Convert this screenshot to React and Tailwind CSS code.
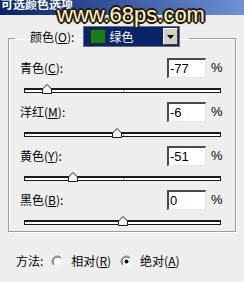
import React from 'react';

// Photoshop "Selective Color" dialog, classic Windows look
const rows = [
  { name: '青色', key: 'C', value: -77 },
  { name: '洋红', key: 'M', value: -6 },
  { name: '黄色', key: 'Y', value: -51 },
  { name: '黑色', key: 'B', value: 0 },
];

const TRACK_W = 197;

const Label = ({ name, k }) => (
  <span className="leading-[16px] whitespace-nowrap">
    {name}(<span className="underline underline-offset-[1px]">{k}</span>):
  </span>
);

const Slider = ({ value }) => {
  const x = ((value + 100) / 200) * TRACK_W;
  return (
    <div className="relative ml-[4px] mt-[10px] h-[5px] w-[197px] border border-t-2 border-[#1a1a1a] bg-white">
      <div className="absolute left-1/2 top-0 h-full w-px bg-[#b8b8b8]" />
      <svg
        width="10"
        height="10"
        viewBox="0 0 10 10"
        className="absolute top-[-6px]"
        style={{ left: x - 5.5 }}
      >
        <polygon points="0.5,9.5 0.5,5 5,0.5 9.5,5 9.5,9.5" fill="#f6f6f6" stroke="#1e1e1e" />
      </svg>
    </div>
  );
};

const Radio = ({ checked }) => (
  <svg width="13" height="13" viewBox="0 0 13 13" className="shrink-0">
    <circle cx="6.5" cy="6.5" r="5.5" fill="#ffffff" />
    <path d="M2.6 10.4 A5.5 5.5 0 0 1 10.4 2.6" fill="none" stroke="#8a8a8a" />
    <path d="M10.4 2.6 A5.5 5.5 0 0 1 2.6 10.4" fill="none" stroke="#ffffff" />
    <path d="M3.3 9.7 A4.5 4.5 0 0 1 9.7 3.3" fill="none" stroke="#4a4a4a" />
    <path d="M9.7 3.3 A4.5 4.5 0 0 1 3.3 9.7" fill="none" stroke="#dedede" />
    {checked && <circle cx="6.5" cy="6.5" r="2" fill="#000" />}
  </svg>
);

export default function App() {
  return (
    <div className="relative h-[282px] w-[244px] overflow-hidden bg-[#eeeeee] font-['Noto_Sans_CJK_SC',sans-serif] text-[12px] text-black">
      {/* title bar (cut off at top) */}
      <div className="h-[15px] overflow-hidden bg-gradient-to-r from-[#0a246a] to-[#7090d4]">
        <div className="mt-[-3px] pl-[1px] text-[12px] font-bold leading-[14px] text-white">
          可选颜色选项
        </div>
      </div>

      {/* site watermark */}
      <div className="absolute left-[57px] top-[4px] font-['Liberation_Sans',Arial,sans-serif] text-[22px] leading-[22px] text-[#fff6c6] [text-shadow:1px_1px_0_#24180a,-1px_-1px_0_#24180a,1px_-1px_0_#24180a,-1px_1px_0_#24180a,2px_0_0_#24180a,-2px_0_0_#24180a,0_2px_0_#24180a,0_-2px_0_#24180a,0_0_3px_#24180a]">
        www.68ps.com
      </div>

      {/* group box */}
      <fieldset className="ml-[8px] mt-[11px] w-[228px] border border-[#9c9c9c] pl-[11px] pb-[6px] pt-[8px] shadow-[1px_1px_0_#ffffff,inset_1px_1px_0_#ffffff]">
        <legend className="ml-[-5px] pb-[3px] pl-[15px] pr-[9px]">
          <div className="flex items-center">
            <Label name="颜色" k="O" />
            <div className="ml-[9px] flex h-[21px] w-[97px] items-center border border-[#6c6c6c] bg-[#0a246a]">
              <div className="ml-[6px] h-[15px] w-[16px] border border-[#0c3d0c] bg-[#1d7a1d]" />
              <span className="ml-[3px] leading-[16px] text-white">绿色</span>
              <div className="ml-auto mr-px flex h-[17px] w-[15px] items-center justify-center border border-b-[#404040] border-l-white border-r-[#404040] border-t-white bg-[#d4d0c8]">
                <svg width="7" height="4" viewBox="0 0 7 4">
                  <polygon points="0,0 7,0 3.5,4" fill="#000" />
                </svg>
              </div>
            </div>
          </div>
        </legend>

        <div className="flex flex-col gap-[9px]">
          {rows.map((r) => (
            <div key={r.key} className="flex flex-col">
              <div className="flex h-[20px] items-center">
                <div className="w-[147px]">
                  <Label name={r.name} k={r.key} />
                </div>
                <div className="flex h-[20px] w-[39px] items-center border-b border-l-2 border-r border-t-2 border-b-[#e4e4e4] border-l-[#4a4a4a] border-r-[#e4e4e4] border-t-[#4a4a4a] bg-white pl-[1px] font-['Liberation_Sans',Arial,sans-serif] text-[13px] leading-[14px]">
                  {r.value}
                </div>
                <span className="ml-[5px] font-['Liberation_Sans',Arial,sans-serif] text-[13px] leading-[14px]">%</span>
              </div>
              <Slider value={r.value} />
            </div>
          ))}
        </div>
      </fieldset>

      {/* method */}
      <div className="mt-[21px] flex h-[16px] items-center pl-[16px]">
        <span className="leading-[16px]">方法:</span>
        <div className="ml-[8px] flex items-center">
          <Radio />
          <span className="ml-[7px] leading-[16px]">
            相对(<span className="underline underline-offset-[1px]">R</span>)
          </span>
        </div>
        <div className="ml-[9px] flex items-center">
          <Radio checked />
          <span className="ml-[7px] leading-[16px]">
            绝对(<span className="underline underline-offset-[1px]">A</span>)
          </span>
        </div>
      </div>
    </div>
  );
}
